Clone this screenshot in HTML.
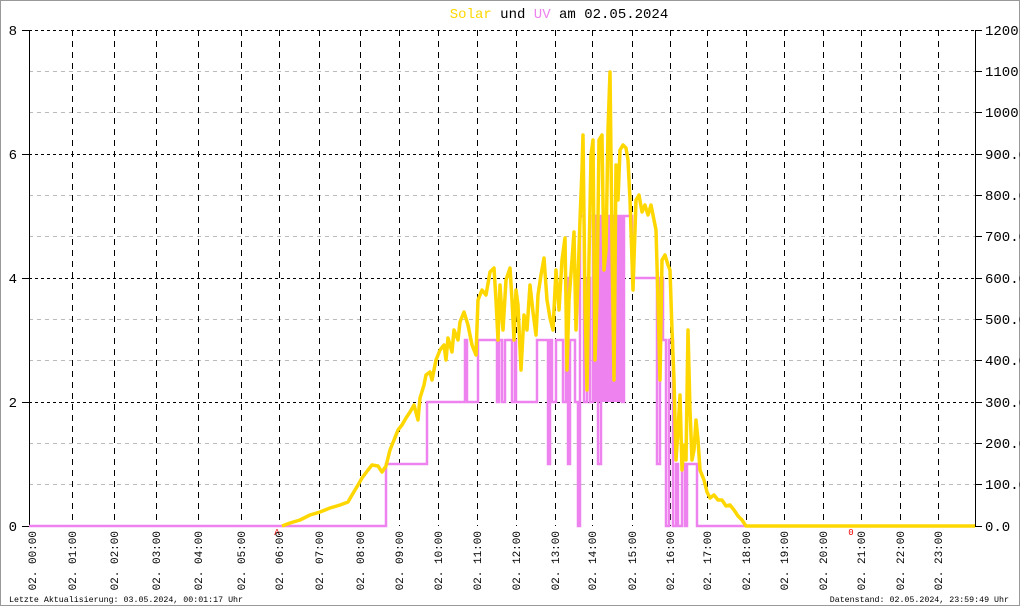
<!DOCTYPE html>
<html><head><meta charset="utf-8"><style>
html,body{margin:0;padding:0;background:#fff}
svg{display:block}
text{font-family:"Liberation Mono",monospace}
</style></head><body>
<svg width="1020" height="606" viewBox="0 0 1020 606" xmlns="http://www.w3.org/2000/svg">
<rect x="0.5" y="0.5" width="1019" height="605" fill="#fff" stroke="#999"/>
<text x="559" y="18" font-size="14" text-anchor="middle"><tspan fill="#ffd700">Solar</tspan> und <tspan fill="#ee82ee">UV</tspan> am 02.05.2024</text>
<g stroke="#bbb" stroke-dasharray="4,4" stroke-width="1">
<line x1="29" x2="975" y1="484.5" y2="484.5"/><line x1="29" x2="975" y1="443.5" y2="443.5"/>
<line x1="29" x2="975" y1="360.5" y2="360.5"/><line x1="29" x2="975" y1="319.5" y2="319.5"/>
<line x1="29" x2="975" y1="236.5" y2="236.5"/><line x1="29" x2="975" y1="195.5" y2="195.5"/>
<line x1="29" x2="975" y1="112.5" y2="112.5"/><line x1="29" x2="975" y1="71.5" y2="71.5"/>
</g>
<g stroke="#000" stroke-dasharray="3,3" stroke-width="1">
<line x1="29" x2="975" y1="30.5" y2="30.5"/><line x1="29" x2="975" y1="154.5" y2="154.5"/>
<line x1="29" x2="975" y1="278.5" y2="278.5"/><line x1="29" x2="975" y1="402.5" y2="402.5"/>
</g>
<g stroke="#000" stroke-dasharray="6,5" stroke-width="1">
<line x1="72.5" x2="72.5" y1="30" y2="526"/><line x1="114.5" x2="114.5" y1="30" y2="526"/>
<line x1="156.5" x2="156.5" y1="30" y2="526"/><line x1="198.5" x2="198.5" y1="30" y2="526"/>
<line x1="241.5" x2="241.5" y1="30" y2="526"/><line x1="279.5" x2="279.5" y1="30" y2="526"/>
<line x1="319.5" x2="319.5" y1="30" y2="526"/><line x1="360.5" x2="360.5" y1="30" y2="526"/>
<line x1="399.5" x2="399.5" y1="30" y2="526"/><line x1="438.5" x2="438.5" y1="30" y2="526"/>
<line x1="477.5" x2="477.5" y1="30" y2="526"/><line x1="516.5" x2="516.5" y1="30" y2="526"/>
<line x1="555.5" x2="555.5" y1="30" y2="526"/><line x1="592.5" x2="592.5" y1="30" y2="526"/>
<line x1="632.5" x2="632.5" y1="30" y2="526"/><line x1="670.5" x2="670.5" y1="30" y2="526"/>
<line x1="707.5" x2="707.5" y1="30" y2="526"/><line x1="746.5" x2="746.5" y1="30" y2="526"/>
<line x1="784.5" x2="784.5" y1="30" y2="526"/><line x1="823.5" x2="823.5" y1="30" y2="526"/>
<line x1="861.5" x2="861.5" y1="30" y2="526"/><line x1="900.5" x2="900.5" y1="30" y2="526"/>
<line x1="938.5" x2="938.5" y1="30" y2="526"/>
</g>
<g stroke="#000" stroke-width="1">
<line x1="29.5" x2="29.5" y1="30" y2="527"/><line x1="975.5" x2="975.5" y1="30" y2="527"/>
<line x1="22" x2="29" y1="30.5" y2="30.5"/><line x1="22" x2="29" y1="154.5" y2="154.5"/>
<line x1="22" x2="29" y1="278.5" y2="278.5"/><line x1="22" x2="29" y1="402.5" y2="402.5"/><line x1="22" x2="29" y1="526.5" y2="526.5"/>
<line x1="975" x2="982" y1="30.5" y2="30.5"/><line x1="975" x2="982" y1="71.5" y2="71.5"/><line x1="975" x2="982" y1="112.5" y2="112.5"/>
<line x1="975" x2="982" y1="154.5" y2="154.5"/><line x1="975" x2="982" y1="195.5" y2="195.5"/><line x1="975" x2="982" y1="236.5" y2="236.5"/>
<line x1="975" x2="982" y1="278.5" y2="278.5"/><line x1="975" x2="982" y1="319.5" y2="319.5"/><line x1="975" x2="982" y1="360.5" y2="360.5"/>
<line x1="975" x2="982" y1="402.5" y2="402.5"/><line x1="975" x2="982" y1="443.5" y2="443.5"/><line x1="975" x2="982" y1="484.5" y2="484.5"/>
<line x1="975" x2="982" y1="526.5" y2="526.5"/>
</g>
<g font-size="14" fill="#000" style="font-family:'Liberation Sans',sans-serif">
<text x="17" y="35" text-anchor="end">8</text><text x="17" y="159" text-anchor="end">6</text>
<text x="17" y="283" text-anchor="end">4</text><text x="17" y="407" text-anchor="end">2</text><text x="17" y="531" text-anchor="end">0</text>
<text x="985" y="35">1200</text><text x="985" y="76">1100</text><text x="985" y="117">1000</text>
<text x="985" y="159">900.0</text><text x="985" y="200">800.0</text><text x="985" y="241">700.0</text>
<text x="985" y="283">600.0</text><text x="985" y="324">500.0</text><text x="985" y="365">400.0</text>
<text x="985" y="407">300.0</text><text x="985" y="448">200.0</text><text x="985" y="489">100.0</text>
<text x="985" y="531">0.0</text>
</g>
<rect x="593" y="216" width="29" height="186" fill="#ee82ee"/>
<polyline fill="none" stroke="#ee82ee" stroke-width="2.5" points="29,526 386,526 386,464 427,464 427,402 465,402 465,340 467,340 467,402 478,402 478,340 497,340 497,402 499,402 499,340 502,340 502,402 505,402 505,340 512,340 512,402 515,402 515,340 516,340 516,402 537,402 537,340 548,340 548,464 550,464 550,340 552,340 552,402 556,402 556,340 563,340 563,402 566,402 566,278 568,278 568,464 570,464 570,340 575,340 575,402 578,402 578,526 580,526 580,216 584,216 584,402 587,402 587,278 590,278 590,402 593,402 593,216 598,216 598,464 601,464 601,216 622,216 622,402 624,402 624,216 632,216 632,278 657,278 657,464 660,464 660,278 663,278 663,340 666,340 666,526 669,526 669,340 673,340 673,526 676,526 676,464 678,464 678,526 682,526 682,464 685,464 685,526 687,526 687,464 697,464 697,526 975,526"/>
<polyline fill="none" stroke="#ffd700" stroke-width="3.5" stroke-linejoin="round" points="282,526 290,523 300,520 310,515 320,512 330,508 340,505 348,502 352,495 358,485 362,478 368,470 372,465 378,466 382,472 386,466 390,450 394,440 398,430 402,425 406,418 410,412 414,405 418,420 420,398 424,385 426,375 430,372 432,380 436,360 440,350 444,345 446,360 448,338 452,352 454,330 458,340 460,322 464,312 468,325 472,345 476,355 478,300 482,290 486,295 490,272 494,268 496,300 498,340 500,285 503,330 506,280 510,268 512,300 514,340 516,290 518,305 521,370 524,315 527,330 530,285 533,312 536,335 538,295 541,275 544,258 547,300 550,318 553,330 556,270 559,310 562,260 565,238 567,370 569,300 572,260 574,232 576,330 578,280 580,220 582,170 583,135 585,300 587,390 589,260 591,155 593,140 595,360 597,300 599,140 602,135 604,270 606,250 608,130 610,72 612,240 614,380 616,165 618,200 620,150 623,145 626,148 628,160 630,200 633,290 636,200 639,195 642,212 645,205 648,215 651,205 654,220 656,230 658,300 660,380 662,260 665,255 668,265 670,270 672,330 674,380 676,460 678,430 680,395 682,470 684,445 686,460 688,330 690,410 692,460 694,450 696,420 698,440 700,470 704,480 707,492 710,498 714,495 718,500 722,500 726,506 730,505 734,510 738,516 742,520 746,526 975,526"/>
<text x="277" y="535" font-size="9" fill="#e00" text-anchor="middle">A</text>
<text x="851" y="535" font-size="9" fill="#e00" text-anchor="middle">0</text>
<g font-size="11" fill="#000" text-anchor="end">
<text transform="translate(36,531) rotate(-90)">02. 00:00</text>
<text transform="translate(76,531) rotate(-90)">02. 01:00</text>
<text transform="translate(118,531) rotate(-90)">02. 02:00</text>
<text transform="translate(160,531) rotate(-90)">02. 03:00</text>
<text transform="translate(202,531) rotate(-90)">02. 04:00</text>
<text transform="translate(245,531) rotate(-90)">02. 05:00</text>
<text transform="translate(283,531) rotate(-90)">02. 06:00</text>
<text transform="translate(323,531) rotate(-90)">02. 07:00</text>
<text transform="translate(364,531) rotate(-90)">02. 08:00</text>
<text transform="translate(403,531) rotate(-90)">02. 09:00</text>
<text transform="translate(442,531) rotate(-90)">02. 10:00</text>
<text transform="translate(481,531) rotate(-90)">02. 11:00</text>
<text transform="translate(520,531) rotate(-90)">02. 12:00</text>
<text transform="translate(559,531) rotate(-90)">02. 13:00</text>
<text transform="translate(596,531) rotate(-90)">02. 14:00</text>
<text transform="translate(636,531) rotate(-90)">02. 15:00</text>
<text transform="translate(674,531) rotate(-90)">02. 16:00</text>
<text transform="translate(711,531) rotate(-90)">02. 17:00</text>
<text transform="translate(750,531) rotate(-90)">02. 18:00</text>
<text transform="translate(788,531) rotate(-90)">02. 19:00</text>
<text transform="translate(827,531) rotate(-90)">02. 20:00</text>
<text transform="translate(865,531) rotate(-90)">02. 21:00</text>
<text transform="translate(904,531) rotate(-90)">02. 22:00</text>
<text transform="translate(942,531) rotate(-90)">02. 23:00</text>
</g>
<text x="9" y="602" font-size="8.3" fill="#000">Letzte Aktualisierung: 03.05.2024, 00:01:17 Uhr</text>
<text x="1009" y="602" font-size="8.3" fill="#000" text-anchor="end">Datenstand: 02.05.2024, 23:59:49 Uhr</text>
</svg>
</body></html>
